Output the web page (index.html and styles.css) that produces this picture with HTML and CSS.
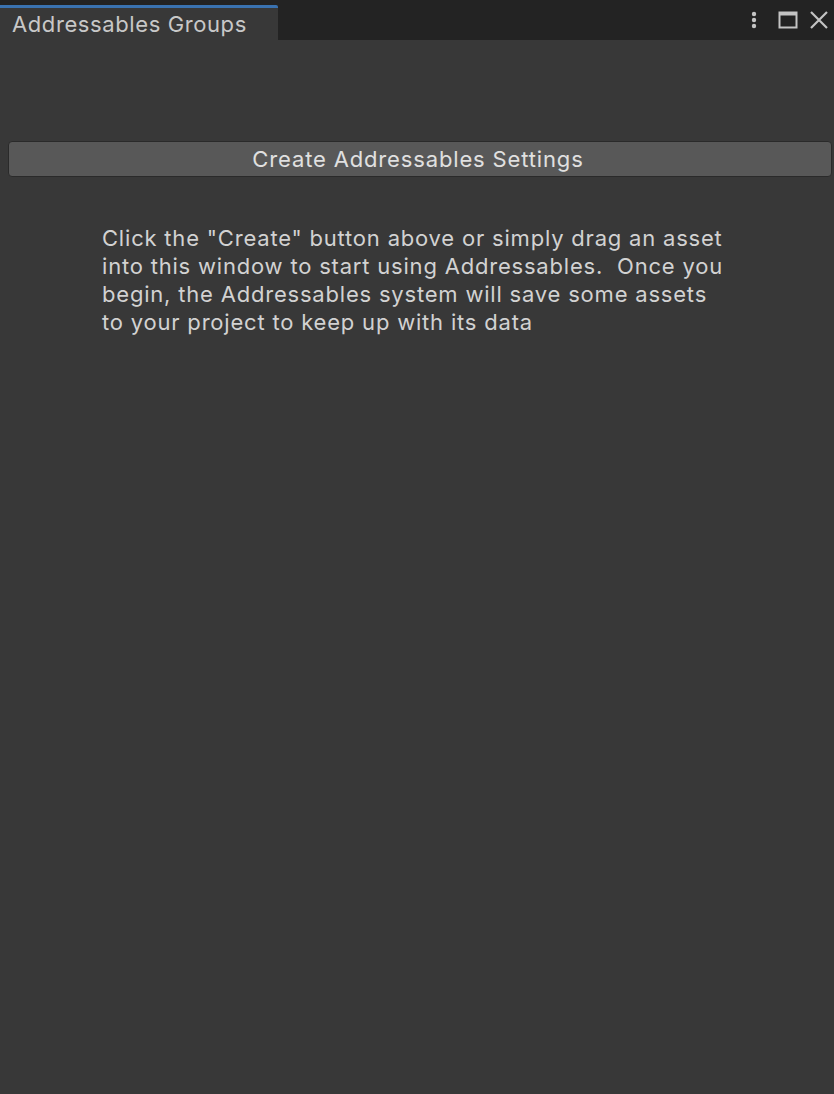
FILE: index.html
```html
<!DOCTYPE html>
<html lang="en">
<head>
    <meta charset="UTF-8">
    <meta name="viewport" content="width=device-width, initial-scale=1.0">
    <title>Addressables Groups</title>
    <link rel="stylesheet" href="styles.css">
</head>
<body>
<div class="window">
    <div class="tab-bar">
        <div class="tab">Addressables Groups</div>
        <div class="tab-actions">
            <svg class="icon kebab" width="8" height="20" viewBox="0 0 8 20">
                <circle cx="4" cy="4" r="2.2" fill="#c4c4c4"/>
                <circle cx="4" cy="10" r="2.2" fill="#c4c4c4"/>
                <circle cx="4" cy="16" r="2.2" fill="#c4c4c4"/>
            </svg>
            <svg class="icon" width="20" height="20" viewBox="0 0 20 20">
                <rect x="1.5" y="2.5" width="17" height="15" fill="none" stroke="#c4c4c4" stroke-width="2"/>
                <rect x="1.5" y="2.5" width="17" height="3" fill="#c4c4c4"/>
            </svg>
            <svg class="icon" width="20" height="20" viewBox="0 0 20 20">
                <path d="M2 2 L18 18 M18 2 L2 18" stroke="#c4c4c4" stroke-width="2.2" fill="none"/>
            </svg>
        </div>
    </div>

    <div class="content">
        <button class="create-btn">Create Addressables Settings</button>
        <p class="hint">
            Click the "Create" button above or simply drag an asset<br>
            into this window to start using Addressables.&nbsp; Once you<br>
            begin, the Addressables system will save some assets<br>
            to your project to keep up with its data
        </p>
    </div>
</div>
</body>
</html>
```

FILE: styles.css
```css
/* Unity editor window look */
html, body {
    margin: 0;
    padding: 0;
    height: 100%;
}
body {
    font-family: Inter, "Noto Sans", sans-serif;
    background-color: #383838;
    color: #d2d2d2;
}
.window {
    display: flex;
    flex-direction: column;
    height: 100%;
}
.tab-bar {
    display: flex;
    align-items: flex-end;
    justify-content: space-between;
    height: 40px;
    background-color: #232323;
    flex-shrink: 0;
}
.tab {
    width: 266px;
    height: 32px;
    padding-left: 12px;
    background-color: #383838;
    border-top: 3px solid #3a72b0;
    border-top-right-radius: 2px;
    font-size: 22px;
    letter-spacing: 0.6px;
    line-height: 32px;
    color: #c8c8c8;
    box-sizing: content-box;
}
.tab-actions {
    display: flex;
    align-items: center;
    gap: 11px;
    align-self: center;
    padding-right: 5px;
}
.kebab {
    margin-right: 9px;
}
.icon {
    display: block;
}
.content {
    flex: 1;
    padding: 101px 2px 0 8px;
}
.create-btn {
    display: block;
    width: 100%;
    height: 36px;
    padding: 0 4px 0 0;
    background-color: #585858;
    border: 1px solid #2a2a2a;
    border-radius: 4px;
    font-family: Inter, "Noto Sans", sans-serif;
    font-size: 22px;
    letter-spacing: 0.85px;
    color: #e0e0e0;
    cursor: pointer;
}
.hint {
    margin: 47px 0 0 94px;
    font-size: 22px;
    letter-spacing: 0.8px;
    line-height: 28px;
    color: #d2d2d2;
}
```
